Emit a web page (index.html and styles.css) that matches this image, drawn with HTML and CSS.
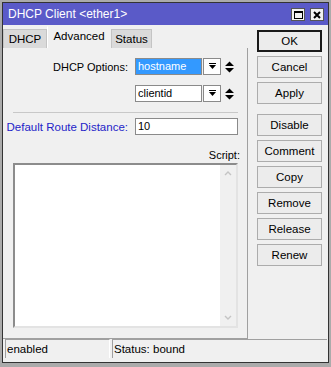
FILE: index.html
```html
<!DOCTYPE html>
<html lang="en">
<head>
    <meta charset="UTF-8">
    <meta name="viewport" content="width=device-width, initial-scale=1.0">
    <title>DHCP Client &lt;ether1&gt;</title>
    <link rel="stylesheet" href="styles.css">
</head>
<body>
    <div class="window">
        <div class="titlebar">
            <span class="title">DHCP Client &lt;ether1&gt;</span>
            <div class="title-buttons">
                <span class="tbtn">
                    <svg width="9" height="8" viewBox="0 0 9 8"><rect x="0.5" y="0.5" width="8" height="7" fill="none" stroke="#000"/><rect x="0" y="0" width="9" height="2" fill="#000"/></svg>
                </span>
                <span class="tbtn">
                    <svg width="8" height="8" viewBox="0 0 8 8"><path d="M1 1 L7 7 M7 1 L1 7" stroke="#000" stroke-width="2"/></svg>
                </span>
            </div>
        </div>
        <div class="content">
            <div class="main">
                <div class="left">
                    <div class="tabs">
                        <div class="tab">DHCP</div>
                        <div class="tab active">Advanced</div>
                        <div class="tab">Status</div>
                    </div>
                    <div class="panel">
                        <div class="row">
                            <span class="label">DHCP Options:</span>
                            <div class="field short selected"><span>hostname</span></div>
                            <div class="drop">
                                <svg width="7" height="7" viewBox="0 0 7 7"><rect x="0" y="0" width="7" height="1" fill="#000"/><path d="M0 2 L7 2 L3.5 6 Z" fill="#000"/></svg>
                            </div>
                            <div class="updown">
                                <svg width="9" height="12" viewBox="0 0 9 12"><path d="M0 5 L9 5 L4.5 0.5 Z M0 7 L9 7 L4.5 11.5 Z" fill="#000"/></svg>
                            </div>
                        </div>
                        <div class="row second">
                            <span class="label"></span>
                            <div class="field short">clientid</div>
                            <div class="drop">
                                <svg width="7" height="7" viewBox="0 0 7 7"><rect x="0" y="0" width="7" height="1" fill="#000"/><path d="M0 2 L7 2 L3.5 6 Z" fill="#000"/></svg>
                            </div>
                            <div class="updown">
                                <svg width="9" height="12" viewBox="0 0 9 12"><path d="M0 5 L9 5 L4.5 0.5 Z M0 7 L9 7 L4.5 11.5 Z" fill="#000"/></svg>
                            </div>
                        </div>
                        <div class="separator"></div>
                        <div class="row">
                            <span class="label blue">Default Route Distance:</span>
                            <div class="field wide">10</div>
                        </div>
                        <div class="script-label">Script:</div>
                        <div class="script">
                            <div class="scrollbar">
                                <svg width="8" height="5" viewBox="0 0 8 5"><path d="M1 4 L4 1 L7 4" fill="none" stroke="#c4c4c4" stroke-width="1.4"/></svg>
                                <svg width="8" height="5" viewBox="0 0 8 5"><path d="M1 1 L4 4 L7 1" fill="none" stroke="#c4c4c4" stroke-width="1.4"/></svg>
                            </div>
                        </div>
                    </div>
                </div>
                <div class="buttons">
                    <button class="default">OK</button>
                    <button>Cancel</button>
                    <button>Apply</button>
                    <button class="group">Disable</button>
                    <button>Comment</button>
                    <button>Copy</button>
                    <button>Remove</button>
                    <button>Release</button>
                    <button>Renew</button>
                </div>
            </div>
            <div class="statusbar">
                <div class="cell first">enabled</div>
                <div class="cell">Status: bound</div>
            </div>
        </div>
    </div>
</body>
</html>
```

FILE: styles.css
```css
body {
    margin: 0;
    background-color: #ababab;
    font-family: "Liberation Sans", Arial, sans-serif;
    font-size: 11px;
    color: #000;
}
.window {
    margin: 2px;
    width: 327px;
    height: 361px;
    border: 1px solid #333;
    box-sizing: border-box;
    display: flex;
    flex-direction: column;
}
.titlebar {
    height: 22px;
    background-color: #5a5ac8;
    color: #fff;
    display: flex;
    align-items: center;
    justify-content: space-between;
    padding: 0 4px 0 5px;
}
.title {
    font-size: 12px;
}
.title-buttons {
    display: flex;
    gap: 5px;
    padding-top: 1px;
}
.tbtn {
    width: 12px;
    height: 11px;
    background-color: #f2f2f2;
    border: 1px solid #555;
    display: flex;
    align-items: center;
    justify-content: center;
}
.content {
    flex: 1;
    background-color: #f0f0f0;
    display: flex;
    flex-direction: column;
}
.main {
    display: flex;
    height: 314px;
}
.left {
    width: 245px;
    display: flex;
    flex-direction: column;
}
.tabs {
    display: flex;
    align-items: flex-end;
    height: 22px;
    margin-top: 1px;
}
.tab {
    height: 19px;
    line-height: 19px;
    background-color: #dadada;
    border: 1px solid #c4c4c4;
    border-bottom: none;
    box-sizing: border-box;
    text-align: center;
    font-size: 11.5px;
}
.tab:first-child {
    width: 44px;
}
.tab.active {
    height: 22px;
    line-height: 19px;
    width: 64px;
    background-color: #f0f0f0;
    border-color: #f0f0f0;
    border-left: 1px solid #fff;
}
.tab:last-child {
    width: 41px;
}
.panel {
    flex: 1;
    border-right: 1px solid #a0a0a0;
    border-bottom: 1px solid #a0a0a0;
    padding: 10px 9px 0 3px;
}
.row {
    display: flex;
    align-items: center;
    height: 17px;
}
.row.second {
    margin-top: 10px;
}
.label {
    width: 122px;
    display: flex;
    justify-content: flex-end;
    white-space: nowrap;
    margin-right: 7px;
}
.label.blue {
    color: #2424c8;
    font-size: 11.5px;
}
.field {
    height: 17px;
    box-sizing: border-box;
    border: 1px solid #8a8a8a;
    background-color: #fff;
    padding: 0 2px;
    line-height: 15px;
}
.field.short {
    width: 67px;
}
.field.wide {
    width: 103px;
}
.field.selected {
    background-color: #3399ff;
    color: #fff;
}
.drop {
    width: 18px;
    height: 17px;
    box-sizing: border-box;
    margin-left: 1px;
    border: 1px solid #8a8a8a;
    background-color: #fff;
    display: flex;
    align-items: center;
    justify-content: center;
}
.updown {
    margin-left: 4px;
    display: flex;
    align-items: center;
}
.separator {
    margin: 10px 0 0 7px;
    height: 1px;
    background-color: #c8c8c8;
    margin-bottom: 5px;
}
.script-label {
    margin-top: 13px;
    text-align: right;
    margin-right: -2px;
    height: 14px;
    line-height: 14px;
}
.script {
    margin: 1px 0 0 7px;
    height: 165px;
    box-sizing: border-box;
    background-color: #fff;
    border: 2px solid;
    border-color: #8c8c8c #e3e3e3 #e3e3e3 #8c8c8c;
    display: flex;
    justify-content: flex-end;
}
.scrollbar {
    width: 16px;
    background-color: #f0f0f0;
    display: flex;
    flex-direction: column;
    justify-content: space-between;
    align-items: center;
    padding: 6px 0 6px;
}
.buttons {
    margin-left: 9px;
    padding-top: 5px;
    display: flex;
    flex-direction: column;
    gap: 4px;
}
button {
    width: 65px;
    height: 22px;
    padding: 0;
    background-color: #ececec;
    border: 1px solid #acacac;
    font-family: "Liberation Sans", Arial, sans-serif;
    font-size: 11.5px;
    color: #000;
}
button.default {
    border: 1px solid #1a1a1a;
    box-shadow: inset 0 0 0 1px #1a1a1a;
}
button.group {
    margin-top: 6px;
}
.statusbar {
    display: flex;
    height: 19px;
    margin-right: 1px;
}
.cell {
    flex: 1;
    border-top: 1px solid #a0a0a0;
    border-left: 1px solid #a0a0a0;
    padding-left: 1px;
    line-height: 18px;
    font-size: 11.5px;
}
.cell.first {
    flex: none;
    width: 102px;
    margin-left: 2px;
    margin-right: 2px;
    border-right: 1px solid #fff;
}
```
